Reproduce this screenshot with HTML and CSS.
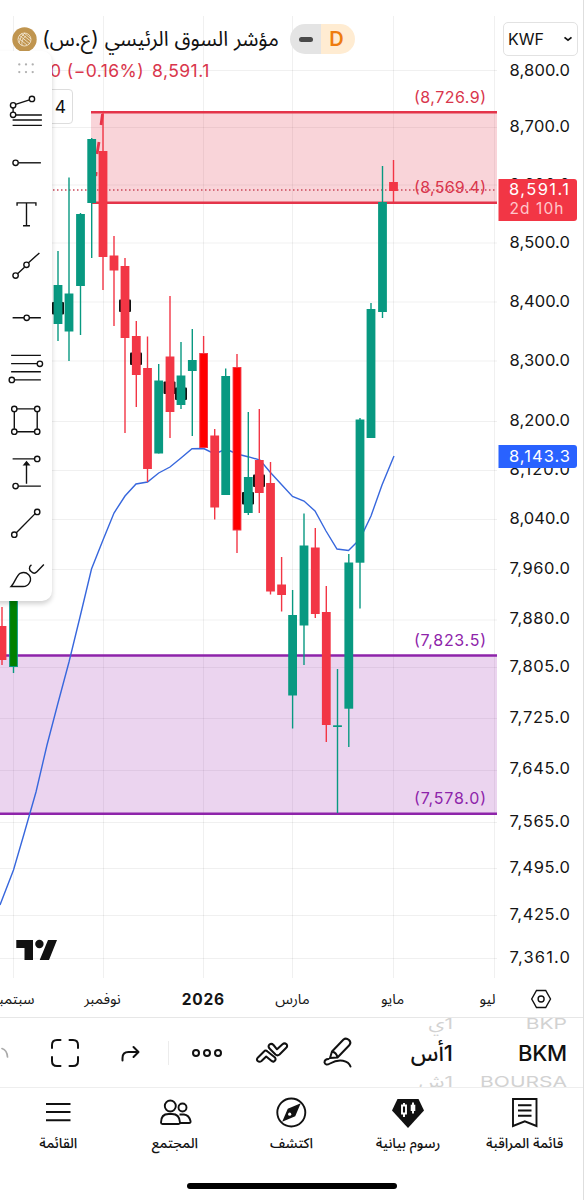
FILE: index.html
```html
<!DOCTYPE html>
<html lang="ar">
<head>
<meta charset="utf-8">
<title>مؤشر السوق الرئيسي</title>
<link rel="stylesheet" href="styles.css">
</head>
<body>
<div class="app">
  <main class="main">
    <svg class="chart" id="chart" width="583" height="1017" viewBox="0 0 583 1017">
      <g id="grid" class="grid"></g>
      <rect class="zone-red" x="91" y="112" width="406" height="91"/>
      <rect class="zone-purple" x="0" y="656" width="497" height="158"/>
      <path class="line-purple" d="M0 655.5H497M0 813.7H497"/>
      <path class="line-red" d="M91 112.2H497M91 202.7H497"/>
      <path class="trend" d="M102.500 114L101 125M99 142L97 154M96.200 172L95.800 176"/>
      <path class="last" d="M53 190H497"/>
      <polyline class="ma" points="0,905 13.5,870 24,834 36,792 47,745 58,703 69,662 80,617 91.500,569 103,540 114,513 125,496 136,484 147.500,482 158.700,473 170,467 181,458 192,448.700 203.700,448.500 214.700,454 226,449 237,454 248,456.700 260,460 270,472 281,484 292.500,496.500 304,501 315,511 326,531 337,549 348.500,550.500 360,539 371,516 382,485 394,456"/>
      <g id="marks"></g>
      <g id="candles"></g>
      <g class="level">
        <text class="t-red" x="414" y="102.500" textLength="72">(8,726.9)</text>
        <text class="t-red" x="414" y="193" textLength="72">(8,569.4)</text>
        <text class="t-purple" x="414" y="645.500" textLength="72">(7,823.5)</text>
        <text class="t-purple" x="414" y="804" textLength="72">(7,578.0)</text>
      </g>
      <g id="prices" class="prices"></g>
      <path fill="#f23645" d="M498.500 179H574a3 3 0 0 1 3 3V218a3 3 0 0 1-3 3H498.500Z"/>
      <path fill="#2962ff" d="M498.500 445H574a3 3 0 0 1 3 3V465a3 3 0 0 1-3 3H498.500Z"/>
      <g class="tag">
        <text x="509" y="195" textLength="60">8,591.1</text>
        <text class="dim" x="509.500" y="213.700" textLength="54">2d 10h</text>
        <text x="509" y="461.500" textLength="61">8,143.3</text>
      </g>
      <path fill="#111" d="M16.300 940H33V960H24.500V948H16.300ZM48 940H57L49 960H39.700Z"/><circle cx="39.400" cy="944" r="4.200" fill="#111"/>
      <g class="months">
        <text x="34.500" y="1004" text-anchor="end">سبتمبر</text>
        <text x="102.500" y="1004" text-anchor="middle">نوفمبر</text>
        <text class="year" x="203.300" y="1004.800" text-anchor="middle">2026</text>
        <text x="292.500" y="1004" text-anchor="middle">مارس</text>
        <text x="392.500" y="1004" text-anchor="middle">مايو</text>
        <text x="487.500" y="1004" text-anchor="middle">ليو</text>
      </g>
      <g fill="none" stroke="#111" stroke-width="1.400"><path d="M536.500 990.500H545.700L550.500 999L545.700 1007.500H536.500L531.700 999Z"/><circle cx="541.100" cy="999" r="3"/></g>
    </svg>

    <header class="head">
      <div class="title-row">
        <svg width="25" height="25" viewBox="0 0 25 25"><circle cx="12.500" cy="12.500" r="12.200" fill="#c0954f"/><g fill="none" stroke="#f5ead6" stroke-width=".8"><circle cx="12.500" cy="12.500" r="6.500"/><path d="M7 8L18 17M9 6.500L18.500 14M6.300 11L15 18M12 6Q16 9 19 12M7 16Q8 9 13 6M10 18.500Q9 12 14 9"/></g></svg>
        <h1 dir="rtl">مؤشر السوق الرئيسي (ع.س)</h1>
        <div class="badges"><span class="dash"><i></i></span><span class="day">D</span></div>
        <button class="currency">KWF<svg width="10" height="8" viewBox="0 0 10 8"><path d="M1.500 2.300L5 5.200L8.500 2.300" fill="none" stroke="#111" stroke-width="1.700"/></svg></button>
      </div>
      <div class="quote"><span>0 (−0.16%)</span><span>8,591.1</span></div>
      <div class="count">4</div>
    </header>

    <aside class="tools">
      <svg class="grip" viewBox="0 0 52 36"><g fill="#b0b0b0"><circle cx="19" cy="14" r="1.200"/><circle cx="26" cy="14" r="1.200"/><circle cx="33" cy="14" r="1.200"/><circle cx="19" cy="22" r="1.200"/><circle cx="26" cy="22" r="1.200"/><circle cx="33" cy="22" r="1.200"/></g></svg>
      <svg viewBox="0 0 52 52"><path d="M15.500 18.500L29.500 14M13 22V26.500M15.500 29.200H42M12.500 34.200H42M12.500 39.700H42"/><circle cx="13" cy="19.500" r="2.700"/><circle cx="32" cy="13" r="2.700"/><circle cx="13" cy="29" r="2.700"/></svg>
      <svg viewBox="0 0 52 52"><path d="M18.500 26H41"/><circle cx="15.500" cy="26" r="2.700"/></svg>
      <svg viewBox="0 0 52 52"><path d="M17 17V14H36V17M26.500 14V37M23 37H30"/></svg>
      <svg viewBox="0 0 52 52"><path d="M17.500 34L24.500 27.500M28.500 23L39.500 13"/><circle cx="15.500" cy="35.800" r="2.700"/><circle cx="26.500" cy="25" r="2.700"/></svg>
      <svg viewBox="0 0 52 52"><path d="M12.500 26H24M29.500 26H41"/><circle cx="26.700" cy="26" r="2.700"/></svg>
      <svg viewBox="0 0 52 52"><path d="M11 12.500H41M11 20.800H37.500M11 29H41M14.500 37.200H41"/><circle cx="40" cy="21" r="2.700"/><circle cx="11.700" cy="37.200" r="2.700"/></svg>
      <svg viewBox="0 0 52 52"><path d="M17 14H34.500M17 37H34.500M14.200 17V34M37.300 17V34"/><circle cx="14.200" cy="14" r="2.700"/><circle cx="37.300" cy="14" r="2.700"/><circle cx="14.200" cy="37" r="2.700"/><circle cx="37.300" cy="37" r="2.700"/></svg>
      <svg viewBox="0 0 52 52"><path d="M12.500 12H34.500M18 39.400H41M26.500 37V17"/><path class="solid" d="M24 18L26.500 15L29 18Z"/><circle cx="37.300" cy="12" r="2.700"/><circle cx="15.500" cy="39.400" r="2.700"/></svg>
      <svg viewBox="0 0 52 52"><path d="M16 35.300L35.500 15.500"/><circle cx="14.200" cy="37" r="2.700"/><circle cx="37.300" cy="14" r="2.700"/></svg>
      <svg viewBox="0 0 52 52"><path d="M11 36.800C15 33 16 26 20 23.500C27 20.500 33 27 29.500 33C28.500 35 26 36.800 23 36.800ZM31.500 15C28.500 17 29 20 31.500 22C33.500 24 35 24 37 22L44 14.700"/></svg>
    </aside>
  </main>

  <section class="toolbar">
    <span class="arc"><svg width="9" height="12" viewBox="0 0 9 12"><path d="M2 1.500Q7 3 7.500 10" fill="none"/></svg></span>
    <svg width="30" height="30" viewBox="0 0 30 30"><path d="M2 10V7Q2 2 7 2H10.500M19.500 2H23Q28 2 28 7V10M28 19V23Q28 28 23 28H19.500M10.500 28H7Q2 28 2 23V19"/></svg>
    <svg width="20" height="18" viewBox="0 0 20 18"><path d="M2.500 16.500V14Q2.500 8 8.500 8H18M13.500 3L18.500 8L13.500 13"/></svg>
    <i class="sep"></i>
    <svg width="32" height="10" viewBox="0 0 32 10"><circle cx="5" cy="5" r="3"/><circle cx="16" cy="5" r="3"/><circle cx="27" cy="5" r="3"/></svg>
    <svg class="idea" width="34" height="22" viewBox="0 0 34 22"><path d="M2.500 16L9 9.500Q10.500 7.500 12.500 9.500L20 15.500Q21.500 18 19 19.500Q17.500 20 16 18.500L11.200 14.500L6.500 19Q4.500 20.500 2.700 19Q1.300 17.500 2.500 16ZM15 7Q12.500 4.500 14.500 2.500Q16.500 1 18.500 3L22 7.300L27.500 2.200Q29.500.5 31.500 2.200Q33 4.200 31 6L24.500 12.500Q22.500 14.200 20.500 12.500Z"/></svg>
    <svg width="30" height="34" viewBox="0 0 30 34"><path d="M7 22L9 15.500L20.500 3.500Q23 1.500 26 4Q28.500 6.500 26.500 9L14.500 21.500ZM9 15.500Q13.500 16.500 14.500 21.500M5.500 23Q1.500 23 1.500 26.500Q2.500 30 7 27.500Q14 23.500 20 24.700Q26 26 27.500 30.500"/></svg>
    <div class="wheel"><span class="faint f1" dir="rtl">1ي</span><b dir="rtl">1أس</b><span class="faint f2" dir="rtl">1ش</span></div>
    <div class="wheel latin"><span class="faint f1">BKP</span><b>BKM</b><span class="faint f2">BOURSA</span></div>
  </section>

  <nav class="nav">
    <a><svg width="34" height="34" viewBox="0 0 34 34"><path d="M5 9H29.500M5 17H29.500M5 25.300H29.500" stroke-width="2"/></svg>القائمة</a>
    <a><svg width="34" height="34" viewBox="0 0 34 34"><circle cx="12.300" cy="11" r="5.500"/><circle cx="24.500" cy="12.500" r="4"/><path d="M3 27.500Q3 19 10.500 19H14Q21.500 19 22 27.500Q22 29 20.500 29H4.500Q3 29 3 27.500ZM21.500 19.500H26Q31 20 32.500 26Q33 28 31 28H22"/></svg>المجتمع</a>
    <a><svg width="34" height="34" viewBox="0 0 34 34"><circle cx="17.300" cy="17.500" r="14"/><path d="M25 10L20.500 20.500L10 25L14.500 14.500Z" fill="#111"/><circle cx="15.700" cy="19.200" r="1.600" fill="#fff" stroke="none"/></svg>اكتشف</a>
    <a><svg width="34" height="34" viewBox="0 0 34 34"><path d="M6.500 4H27.500L33 15.500L17 33L1 15.500Z" fill="#111" stroke="none"/><path d="M11 10.500H15V18.500H11ZM13 8V10.500M13 18.500V22" stroke="#fff"/><path d="M22 7.500V18.500" stroke="#fff"/><path d="M19.700 9.700H24.300V16H19.700Z" fill="#fff" stroke="none"/></svg>رسوم بيانية</a>
    <a><svg width="34" height="34" viewBox="0 0 34 34"><path d="M5 4H28.500V31L16.800 26.300L5 31ZM10 10.300H23.500M10 15.500H23.500M10 20.800H23.500"/></svg>قائمة المراقبة</a>
  </nav>
  <footer class="home"><i></i></footer>
</div>
<script src="chart.js"></script>
</body>
</html>
```
FILE: styles.css
```css
* { box-sizing: border-box; }
body {
  margin: 0;
  background: #fff;
  color: #111;
  font-family: Inter, "Noto Sans Arabic", "DejaVu Sans", sans-serif;
}
.app {
  width: 584px;
  height: 1200px;
  display: flex;
  flex-direction: column;
  border-right: 1px solid #dedede;
  overflow: hidden;
}
.main { position: relative; height: 1017px; flex: none; }
.chart { display: block; }
.grid { stroke: #000; stroke-opacity: .06; fill: none; }
.zone-red { fill: #e4344a; fill-opacity: .21; }
.zone-purple { fill: #9c27b0; fill-opacity: .2; }
.line-red { stroke: #e4344a; stroke-width: 2.6; }
.line-purple { stroke: #8e24aa; stroke-width: 2.6; }
.trend { stroke: #e4344a; stroke-width: 2.8; fill: none; }
.last { stroke: #c9485a; stroke-width: 1.3; stroke-dasharray: 1.5 2.5; }
.ma { fill: none; stroke: #3767dd; stroke-width: 1.4; }
.level { font-size: 16px; }
.t-red { fill: #d9364c; }
.t-purple { fill: #8e24aa; }
.prices { font-size: 16.5px; fill: #151515; }
.tag { font-size: 16.5px; fill: #fff; }
.tag .dim { font-size: 15.5px; fill: #ffc6cb; }
.months { font-size: 14.6px; fill: #151515; }
.months .year { font-size: 15.5px; font-weight: 700; letter-spacing: .7px; }

.head { position: absolute; left: 0; top: 21px; width: 583px; padding-left: 12px; }
.title-row { display: flex; align-items: center; height: 36px; }
.title-row h1 {
  margin: 0 0 0 6px;
  width: 236px;
  font-size: 20.7px;
  font-weight: 400;
  line-height: 36px;
  white-space: nowrap;
}
.badges { display: flex; width: 65px; height: 30px; margin-left: 11px; border-radius: 15px; overflow: hidden; }
.badges span { flex: 1; display: flex; align-items: center; justify-content: center; }
.dash { background: #e4e4e4; }
.dash i { width: 14px; height: 5px; border-radius: 2.5px; background: #4a4a4a; }
.day { background: #ffecd2; color: #ee7c0e; font-size: 20px; font-weight: 600; padding-right: 3px; }
.currency {
  display: flex;
  justify-content: space-between;
  align-items: center;
  width: 75px;
  height: 34px;
  margin: 0 5px 0 auto;
  padding: 0 4px 0 4px;
  border: 1px solid #e2e2e2;
  border-radius: 5px;
  background: #fff;
  color: #111;
  font: 400 16px Inter, sans-serif;
}
.quote { display: flex; gap: 8px; margin: 3px 0 0 38px; font-size: 17.5px; line-height: 22px; letter-spacing: .45px; color: #d9364c; white-space: nowrap; }
.count {
  width: 33px;
  height: 35px;
  margin: 7px 0 0 28px;
  padding-right: 6px;
  border: 1px solid #ddd;
  border-radius: 4px;
  background: #fff;
  font-size: 17.5px;
  line-height: 33px;
  text-align: right;
}
.tools {
  position: absolute;
  left: -10px;
  top: 51px;
  width: 62px;
  height: 549.5px;
  padding-left: 10px;
  display: flex;
  flex-direction: column;
  background: #fff;
  border-radius: 10px;
  box-shadow: 0 3px 5px rgba(0,0,0,.18);
}
.tools svg { width: 52px; height: 51.6px; flex: none; fill: none; stroke: #111; stroke-width: 1.4; overflow: visible; }
.tools .grip { height: 34.5px; stroke: none; }
.tools .solid { fill: #111; }

.toolbar {
  display: grid;
  grid-template-columns: 32px 66px 64px 13px 64px 66px 66px 82px 114px;
  height: 71px;
  flex: none;
  align-items: center;
  justify-items: center;
  border-top: 1px solid #e7e7e7;
  border-bottom: 1px solid #eee;
}
.toolbar svg { fill: none; stroke: #111; stroke-width: 2; stroke-linejoin: round; stroke-linecap: round; }
.toolbar .arc { justify-self: start; }
.toolbar .arc svg { stroke: #aaa; stroke-width: 1.7; }
.sep { width: 1px; height: 24px; background: #ececec; }
.wheel {
  width: 100%;
  height: 69px;
  display: flex;
  flex-direction: column;
  align-items: flex-end;
  justify-content: space-between;
  overflow: hidden;
  white-space: nowrap;
}
.wheel b { font-size: 22px; font-weight: 500; line-height: 36px; }
.latin b { letter-spacing: -.2px; }
.faint { color: #d2d2d2; font-size: 21px; line-height: 14px; transform: scaleY(.72); }
.f1 { margin-top: -1px; }
.f2 { margin-bottom: -2px; }

.nav { display: grid; grid-template-columns: repeat(5, 1fr); flex: none; height: 70px; padding-top: 7px; }
.nav a { display: flex; flex-direction: column; align-items: center; font-size: 14.1px; font-weight: 500; line-height: 27px; white-space: nowrap; }
.nav svg { fill: none; stroke: #111; stroke-width: 1.9; flex: none; }
.home { display: flex; justify-content: center; padding-top: 25px; }
.home i { width: 210px; height: 6px; border-radius: 3px; background: #000; }
```
FILE: chart.js
```js
const NS = "http://www.w3.org/2000/svg";
function add(parent, tag, attrs, text) {
  const el = document.createElementNS(NS, tag);
  for (const k in attrs) el.setAttribute(k, attrs[k]);
  if (text) el.textContent = text;
  document.getElementById(parent).appendChild(el);
}
const G = "#089981", R = "#f23645";

[70.5, 127.5, 185, 243, 302, 361, 421.5, 470.5, 519.5, 569.5, 620, 667.5, 718.5, 770.5, 822.5, 868.5, 915.5, 958.5]
  .forEach(y => add("grid", "path", { d: `M0 ${y}H497` }));
[13.5, 103.5, 203.5, 292.5, 393.5, 494.5].forEach(x => add("grid", "path", { d: `M${x} 16V978` }));

[[8800, 70], [8700, 126], [8600, 184], [8500, 242], [8400, 301], [8300, 360], [8200, 420], [8120, 469.5], [8040, 518],
 [7960, 568], [7880, 618], [7805, 666], [7725, 717], [7645, 768.5], [7565, 821], [7495, 867], [7425, 914], [7361, 957]]
  .forEach(([v, y]) => add("prices", "text", { x: 509.5, y: y + 5.8, textLength: 60.5 }, v.toLocaleString("en-US") + ".0"));

[[52, 302], [119, 299.5], [130, 352.5], [163.5, 381.5], [175, 387.5], [242, 492], [253, 474.5]]
  .forEach(([x, y]) => add("marks", "rect", { x, y, width: 12, height: 12.5, rx: 1, fill: "#111" }));

// x, wick top, wick bottom, body top, body bottom, colour, optional body fill
[
  [2, 607, 665, 626, 660, R], [13.5, 590, 673, 590, 667, G, "#008000"],
  [58, 251, 341, 285, 324, G], [69, 177.5, 361, 293.5, 331.5, G], [80.5, 213, 335, 214, 286, G],
  [91.7, 138, 258, 139, 203, G], [103, 112, 290, 151, 257, R], [114, 236, 326, 255.5, 270.5, R],
  [125, 258, 433, 266, 338, R], [136.3, 321, 407, 336, 375, R], [147.5, 336.5, 482, 368, 469, R],
  [158.7, 364, 453.5, 380.5, 453.5, G], [170, 296, 438, 356.5, 412, R], [181, 342, 409, 375.5, 405, G],
  [192.3, 329, 436, 360, 371, G], [203.6, 336, 448, 353, 448, R, "#ff0000"], [214.7, 429, 519.5, 435.5, 507.5, R],
  [225.7, 368.5, 495, 376, 495, G], [237, 354, 553, 367, 530.5, R, "#ff0000"], [248.3, 412, 515, 477, 513, G],
  [259.3, 409, 513, 460, 493, R], [270.5, 462, 594.5, 483, 591.5, R], [281.6, 557, 611.5, 584.5, 595, R],
  [292.6, 590, 728.5, 615, 695.5, G], [304, 513.5, 665, 545.5, 625.5, G], [315.3, 528, 618, 547.5, 614, R],
  [326.3, 586, 742, 612, 725, R], [337.5, 669, 813, 725.3, 727, G], [348.8, 554, 747, 562.5, 708.7, G],
  [360, 418, 608.5, 419.5, 562.7, G], [371, 303, 438, 309, 438, G], [382.5, 166, 318, 202, 312, G],
  [393.5, 160, 202, 182, 191, R]
].forEach(([x, wt, wb, bt, bb, c, fill]) => {
  add("candles", "path", { d: `M${x} ${wt}V${wb}`, stroke: c, "stroke-width": 1.4 });
  add("candles", "rect", { x: x - 4.4, y: bt, width: 8.8, height: bb - bt, fill: c });
  if (fill) add("candles", "rect", { x: x - 3.4, y: bt + 1, width: 6.8, height: bb - bt - 2, fill });
});
```
